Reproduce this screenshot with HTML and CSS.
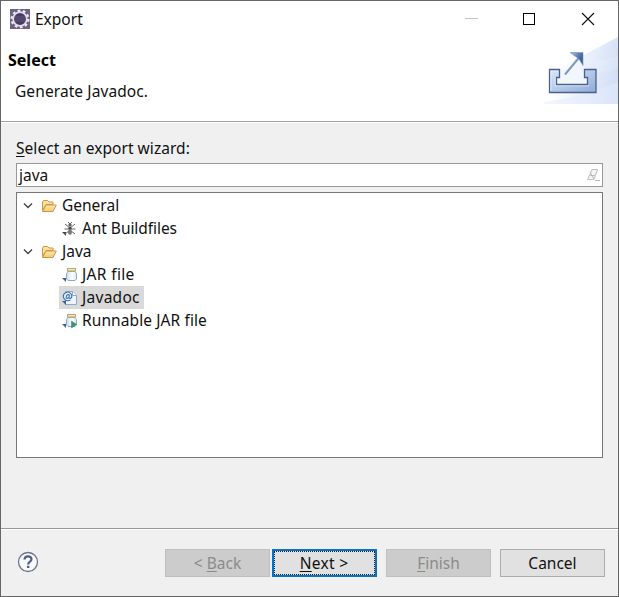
FILE: index.html
```html
<!DOCTYPE html>
<html lang="en">
<head>
<meta charset="utf-8">
<title>Export</title>
<link rel="stylesheet" href="styles.css">
</head>
<body>
<svg class="defs" width="0" height="0" aria-hidden="true">
  <defs>
    <linearGradient id="fold" x1="0" y1="0" x2="0" y2="1"><stop offset="0" stop-color="#ffedb5"/><stop offset="1" stop-color="#f5c66b"/></linearGradient>
    <linearGradient id="glass" x1="0" y1="0" x2="1" y2="0"><stop offset="0" stop-color="#c9def2"/><stop offset=".6" stop-color="#fff"/><stop offset="1" stop-color="#d5e3f1"/></linearGradient>
    <symbol id="folder" viewBox="0 0 16 14">
      <path d="M1.500 11.500V3l1-1.500h4L8 3h4v2.500H5L1.500 11.500z" fill="#fbdf9d" stroke="#cf9645"/>
      <path d="M1.500 12.500L5 6h10.300l-3.300 6.500z" fill="url(#fold)" stroke="#cf9645"/>
    </symbol>
    <symbol id="jar" viewBox="0 0 16 16">
      <path d="M0 11h4v4z" fill="#3a6290"/>
      <path d="M6 4.500h7l1.500 2v5.500l-1.500 1.500H6L4.500 12V6.500z" fill="url(#glass)" stroke="#8dabc9"/>
      <rect x="5.500" y="1.500" width="8" height="2.500" fill="#f5e8b8" stroke="#b9a765"/>
    </symbol>
  </defs>
</svg>
<div class="window">
  <div class="titlebar">
    <svg class="app" viewBox="0 0 20 20">
      <rect width="20" height="20" fill="#6b6284"/>
      <circle cx="10" cy="10" r="8.200" fill="none" stroke="#ece9f0" stroke-width="2.600" stroke-dasharray="2.600 2.550"/>
      <circle cx="10" cy="10" r="6.800" fill="#453c60" stroke="#e2dee7" stroke-width="1.700"/>
      <path d="M5 8h10M4.500 10h11M5 12h10" stroke="#675d82" stroke-width=".8"/>
    </svg>
    <span class="title">Export</span>
    <svg class="controls" viewBox="0 0 140 20">
      <path d="M6 8.500h13" stroke="#c4c4c4"/>
      <rect x="64.500" y="3.500" width="11" height="11" fill="none" stroke="#000"/>
      <path d="M123 3l12 12M135 3l-12 12" stroke="#111" stroke-width="1.100"/>
    </svg>
  </div>
  <div class="banner">
    <div class="copy">
      <h1>Select</h1>
      <p>Generate Javadoc.</p>
    </div>
    <svg class="art" viewBox="0 0 74 68">
      <defs>
        <linearGradient id="sky" x1="0" y1=".3" x2="1" y2=".5"><stop offset=".2" stop-color="#fff"/><stop offset="1" stop-color="#d3dff7"/></linearGradient>
        <linearGradient id="haze" x1="0" y1="0" x2="1" y2="0"><stop offset="0" stop-color="#f3f6fe"/><stop offset="1" stop-color="#dbe5f9"/></linearGradient>
        <linearGradient id="tray" x1="0" y1="0" x2="1" y2="1"><stop offset="0" stop-color="#dce7f8"/><stop offset="1" stop-color="#8fabd8"/></linearGradient>
        <linearGradient id="arrow" x1="0" y1="0" x2="1" y2=".6"><stop offset="0" stop-color="#a9c4e6"/><stop offset=".8" stop-color="#41669f"/></linearGradient>
      </defs>
      <path d="M0 68V40L38 20L74 1v67z" fill="url(#sky)"/>
      <path d="M0 66Q40 61 74 46v22H0z" fill="url(#haze)"/>
      <path d="M50 26L74 20v12L54 37z" fill="#fff" opacity=".13"/>
      <path d="M5.500 33.500h10v8h-3v7h31v-7h-3v-8h11.500v23H5.500z" fill="url(#tray)"/>
      <path d="M15.500 33.500h25v8h3v7h-31v-7h3z" fill="#f2f6fd"/>
      <path d="M6.800 55V34.800h7.500M11.300 41v8.700h33.500" fill="none" stroke="#edf3fd"/>
      <path d="M5.500 33.500h10v8h-3v7h31v-7h-3v-8h11.500v23H5.500z" fill="none" stroke="#48618e" stroke-width="1.300"/>
      <path d="M21 38.500L36 20.500" stroke="#8198b9" stroke-width="2"/>
      <path d="M26 16.500h13v13l-4-6.500z" fill="url(#arrow)" stroke="#7591bb" stroke-width=".6"/>
    </svg>
  </div>
  <div class="content">
    <label class="prompt"><u>S</u>elect an export wizard:</label>
    <div class="filter"><span>java</span>
      <svg viewBox="0 0 14 14"><path d="M1.500 11.500L6 1.500h5.500L8 11.500zM3.500 7.500h5.500" fill="#f3f3f3" stroke="#c0c0c0"/><path d="M4 4l4 7M9 12.500h5" stroke="#bbb"/></svg>
    </div>
    <div class="tree">
      <div class="row"><svg class="chev" viewBox="0 0 10 8"><path d="M1 1.500l4 4 4-4"/></svg><svg class="folder"><use href="#folder"/></svg><span>General</span></div>
      <div class="row child"><svg class="icon" viewBox="0 0 16 16"><path d="M0 11h4v4z" fill="#444"/><g stroke="#6a6a6a" fill="none"><path d="M3 3l5 4 5-4M2.500 8h11M3 13l5-4 5 4M6 1l2 2 2-2"/></g><circle cx="8" cy="4" r="1.700" fill="#666"/><ellipse cx="8" cy="7.300" rx="1.600" ry="1.500" fill="#444"/><ellipse cx="8" cy="11.300" rx="1.900" ry="2.700" fill="#777"/></svg><span>Ant Buildfiles</span></div>
      <div class="row"><svg class="chev" viewBox="0 0 10 8"><path d="M1 1.500l4 4 4-4"/></svg><svg class="folder"><use href="#folder"/></svg><span>Java</span></div>
      <div class="row child jar"><svg class="icon"><use href="#jar"/></svg><span>JAR file</span></div>
      <div class="row child selected"><svg class="icon" viewBox="0 0 16 16"><path d="M3.500 1.500h7l4 4v9h-11z" fill="#eef4fd" stroke="#91a7c5"/><path d="M10.500 1.500v4h4" fill="#fff" stroke="#91a7c5"/><path d="M0 11h4v4z" fill="#3a6290"/><circle cx="5.800" cy="6.500" r="4.700" fill="#e4effd"/><path d="M8.500 10q-4.500 2-6.500-1.500T3.500 2.800t6 1.700q1 3.500-1.500 4-1.300 0-.7-4M7.500 6q-.5-2-2-1.200T4.200 8q1.800 1 3-1" fill="none" stroke="#356da9" stroke-width="1.100"/></svg><span>Javadoc</span></div>
      <div class="row child"><svg class="icon" viewBox="0 0 16 16"><use href="#jar"/><path d="M9.500 8l5 3.500-5 3.500z" fill="#38966f" stroke="#2c8460" stroke-width=".5"/></svg><span>Runnable JAR file</span></div>
    </div>
  </div>
  <div class="footer">
    <svg class="help" viewBox="0 0 22 22"><circle cx="11" cy="11" r="9.500" fill="#f8f9fb" stroke="#6d7588" stroke-width="1.300"/><path d="M7.500 8.500q.2-3.200 3.500-3.200t3.500 2.800q0 1.500-1.800 2.700-1.500 1-1.500 2.700" fill="none" stroke="#535f88" stroke-width="2.200"/><rect x="10" y="14.800" width="2.400" height="2.200" fill="#535f88"/></svg>
    <div class="buttons">
      <button class="off" disabled><span>&lt; <u>B</u>ack</span></button>
      <button class="focus"><span><u>N</u>ext &gt;</span></button>
      <button class="off finish" disabled><span><u>F</u>inish</span></button>
      <button class="cancel"><span>Cancel</span></button>
    </div>
  </div>
</div>
</body>
</html>
```
FILE: styles.css
```css
* { box-sizing: border-box; }
body { margin: 0; color: #111; font: 15.5px/23px "Noto Sans", "Open Sans", sans-serif; }
svg { display: block; flex: none; }
.defs { position: absolute; }
u { text-decoration-thickness: 1px; text-underline-offset: 2px; }
.window { width: 619px; height: 597px; border: 1px solid #666; background: #f0f0f0; display: flex; flex-direction: column; }
.titlebar { height: 37px; background: #fff; display: flex; align-items: center; padding-left: 9px; }
.app { width: 20px; height: 20px; margin-top: -1px; }
.title { margin-left: 5px; }
.controls { width: 140px; height: 20px; margin: 1px 19px 0 auto; }
.banner { height: 84px; background: #fff; border-bottom: 1px solid #a0a0a0; display: flex; justify-content: space-between; flex: none; }
.copy { padding: 11px 0 0 7px; }
h1 { margin: 0; font-size: 16px; line-height: 23px; font-weight: 700; color: #000; }
p { margin: 8px 0 0 7px; letter-spacing: .09px; }
.art { width: 74px; height: 68px; margin-top: -2px; }
.content { height: 406px; padding: 16px 15px 0; border-top: 1px solid #fff; flex: none; }
.prompt { display: block; height: 24px; line-height: 19px; letter-spacing: .04px; }
.filter { height: 24px; background: #fff; border: 1px solid #999; display: flex; align-items: center; justify-content: space-between; padding: 0 2px; }
.filter svg { width: 14px; height: 14px; }
.tree { height: 266px; margin-top: 5px; padding-top: 1px; background: #fff; border: 1px solid #777; }
.row { height: 23px; display: flex; align-items: center; padding-left: 6px; line-height: 23px; }
.chev { width: 10px; height: 8px; margin-right: 8px; fill: none; stroke: #444; stroke-width: 1.4; }
.folder { width: 16px; height: 14px; margin-right: 5px; }
.child { width: max-content; margin-left: 42px; padding: 0 4px 0 3px; letter-spacing: .1px; }
.child:nth-child(2) { letter-spacing: -.06px; }
.jar { letter-spacing: .35px; }
.icon { width: 16px; height: 16px; margin-right: 4px; }
.selected { background: #d9d9d9; letter-spacing: .28px; }
.footer { height: 68px; border-top: 1px solid #999; display: flex; justify-content: space-between; padding: 20px 13px 0 16px; box-shadow: inset 0 1px #fff; }
.help { width: 22px; height: 22px; margin-top: 2px; }
.buttons { display: flex; }
button { width: 105px; height: 28px; padding: 0; font: inherit; color: #111; background: #e1e1e1; border: 1px solid #adadad; }
button span { display: block; line-height: 26px; }
.off { color: #8b8b8b; background: #ccc; border-color: #bfbfbf; }
.focus { margin-left: 2px; border: 2px solid #0a70c4; outline: 1px dotted #222; outline-offset: -3px; }
.focus span { line-height: 24px; letter-spacing: .3px; margin-left: -1px; }
.finish, .cancel { margin-left: 9px; }
```
